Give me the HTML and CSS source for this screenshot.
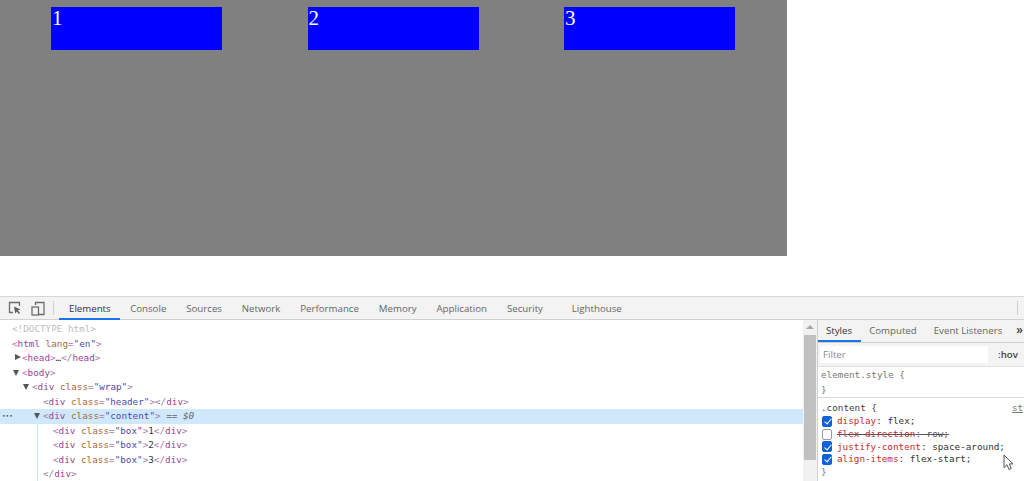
FILE: index.html
```html
<!DOCTYPE html>
<html lang="en">
<head>
<meta charset="utf-8">
<title>Flex demo with DevTools</title>
<link rel="stylesheet" href="styles.css">
</head>
<body>
<main class="viewport">
  <section class="wrap">
    <div class="box">1</div>
    <div class="box">2</div>
    <div class="box">3</div>
  </section>
</main>
<section class="devtools">
  <header class="toolbar">
    <div class="tool-icons">
      <svg class="tool-icon" width="14" height="14" viewBox="0 0 14 14" aria-hidden="true"><path d="M5 11.5H1.5V1.5h10V5" fill="none" stroke="#6e6e6e" stroke-width="1.3"/><path d="M6 5.5l6.5 3-2.6 1 2.2 2.6-1.2 1-2.1-2.6-1.6 2z" fill="#5f5f5f"/></svg>
      <svg class="tool-icon" width="14" height="15" viewBox="0 0 14 15" aria-hidden="true"><path d="M4.5 4V1.5h8.5v12H8" fill="none" stroke="#6e6e6e" stroke-width="1.3"/><rect x="1" y="6" width="6.5" height="8" fill="none" stroke="#6e6e6e" stroke-width="1.3"/></svg>
    </div>
    <span class="divider"></span>
    <nav class="tabs">
      <span class="tab active">Elements</span>
      <span class="tab">Console</span>
      <span class="tab">Sources</span>
      <span class="tab">Network</span>
      <span class="tab">Performance</span>
      <span class="tab">Memory</span>
      <span class="tab">Application</span>
      <span class="tab">Security</span>
      <span class="tab tab-light">Lighthouse</span>
    </nav>
    <span class="divider divider-end"></span>
  </header>
  <div class="panes">
    <div class="dom">
      <div class="tree">
        <div class="line ind0 doctype">&lt;!DOCTYPE html&gt;</div>
        <div class="line ind0"><i>&lt;</i><b>html</b> <u>lang</u><i>=</i><s>"en"</s><i>&gt;</i></div>
        <div class="line ind1"><span class="tri closed"></span><i>&lt;</i><b>head</b><i>&gt;</i>…<i>&lt;/</i><b>head</b><i>&gt;</i></div>
        <div class="line ind1"><span class="tri"></span><i>&lt;</i><b>body</b><i>&gt;</i></div>
        <div class="line ind2"><span class="tri"></span><i>&lt;</i><b>div</b> <u>class</u><i>=</i><s>"wrap"</s><i>&gt;</i></div>
        <div class="line ind3"><i>&lt;</i><b>div</b> <u>class</u><i>=</i><s>"header"</s><i>&gt;&lt;/</i><b>div</b><i>&gt;</i></div>
        <div class="line ind3 selected"><span class="dots">•••</span><span class="tri"></span><i>&lt;</i><b>div</b> <u>class</u><i>=</i><s>"content"</s><i>&gt;</i> <span class="eq">== <em>$0</em></span></div>
        <div class="children">
          <div class="line ind4"><i>&lt;</i><b>div</b> <u>class</u><i>=</i><s>"box"</s><i>&gt;</i>1<i>&lt;/</i><b>div</b><i>&gt;</i></div>
          <div class="line ind4"><i>&lt;</i><b>div</b> <u>class</u><i>=</i><s>"box"</s><i>&gt;</i>2<i>&lt;/</i><b>div</b><i>&gt;</i></div>
          <div class="line ind4"><i>&lt;</i><b>div</b> <u>class</u><i>=</i><s>"box"</s><i>&gt;</i>3<i>&lt;/</i><b>div</b><i>&gt;</i></div>
          <div class="line ind3"><i>&lt;/</i><b>div</b><i>&gt;</i></div>
        </div>
      </div>
      <div class="scrollbar">
        <span class="arrow"></span>
        <span class="thumb"></span>
      </div>
    </div>
    <aside class="sidebar">
      <div class="side-tabs">
        <span class="side-tab active">Styles</span>
        <span class="side-tab">Computed</span>
        <span class="side-tab listeners">Event Listeners</span>
        <span class="side-tab more">»</span>
      </div>
      <div class="filter-row">
        <span class="filter">Filter</span>
        <span class="hov">:hov</span>
      </div>
      <div class="rule rule-first">
        <div class="rule-line muted">element.style {</div>
        <div class="rule-line muted">}</div>
      </div>
      <div class="rule rule-second">
        <div class="rule-head"><span>.content {</span><span class="source">sty</span></div>
        <label class="prop"><span class="check on"></span><span><span class="name">display</span>: flex;</span></label>
        <label class="prop"><span class="check"></span><span class="off"><span class="name">flex-direction</span>: row;</span></label>
        <label class="prop"><span class="check on"></span><span><span class="name">justify-content</span>: space-around;</span></label>
        <label class="prop"><span class="check on"></span><span><span class="name">align-items</span>: flex-start;</span></label>
        <div class="rule-line muted rule-close">}</div>
      </div>
    </aside>
  </div>
  <svg class="cursor" width="12" height="17" viewBox="0 0 12 17" aria-hidden="true"><path d="M1 1v12.5l3-2.8 2 4.8 2.3-1-2-4.6H10z" fill="#fff" stroke="#555" stroke-width="1"/></svg>
</section>
</body>
</html>
```
FILE: styles.css
```css
* { box-sizing: border-box; }
html, body { margin: 0; height: 100%; }
body {
  width: 1024px;
  height: 481px;
  overflow: hidden;
  background: #fff;
  display: flex;
  flex-direction: column;
}
.viewport { height: 296px; flex: none; }
.wrap {
  width: 787px;
  height: 256px;
  background: #808080;
  display: flex;
  justify-content: space-between;
  align-items: flex-start;
  padding: 7px 52px 0 51px;
}
.box {
  width: 171px;
  height: 43px;
  background: #0000ff;
  color: #fff;
  font: 21px/22px "Liberation Serif", serif;
  padding-left: 1px;
}
.devtools {
  position: relative;
  flex: 1;
  min-height: 0;
  display: flex;
  flex-direction: column;
  overflow: hidden;
  font-family: "Open Sans", sans-serif;
}
.toolbar {
  height: 24px;
  flex: none;
  display: flex;
  align-items: center;
  background: #f3f3f3;
  border-top: 1px solid #d6d6d6;
  border-bottom: 1px solid #d0d0d0;
}
.tool-icons { display: flex; align-items: center; gap: 9px; padding-left: 8px; width: 53px; flex: none; }
.tool-icon { flex: none; }
.divider { width: 1px; height: 14px; background: #cfcfcf; flex: none; }
.divider-end { margin-left: auto; margin-right: 6px; }
.tabs { display: flex; height: 23px; margin-left: 5px; flex: none; }
.tab {
  padding: 0 9.95px;
  font-size: 9.7px;
  line-height: 23px;
  color: #666;
  white-space: nowrap;
}
.tab:first-child { padding-left: 10px; padding-right: 9.5px; }
.tab.active { color: #333; box-shadow: inset 0 -2px 0 #1a73e8; }
.tab-light { margin-left: 9px; }
.panes { flex: 1; display: flex; min-height: 0; }
.dom { width: 817px; flex: none; display: flex; background: #fff; }
.tree {
  flex: 1;
  min-width: 0;
  padding-top: 2px;
  font: 9.3px/14.5px "DejaVu Sans Mono", monospace;
  color: #333;
}
.line { position: relative; height: 14.5px; white-space: pre; }
.line i { font-style: normal; color: #a57da3; }
.line b { font-weight: normal; color: #9a3f94; }
.line u { text-decoration: none; color: #a8692f; }
.line s { text-decoration: none; color: #4a4ab0; }
.doctype { color: #bdbdbd; }
.ind0 { padding-left: 12px; }
.ind1 { padding-left: 22px; }
.ind2 { padding-left: 32px; }
.ind3 { padding-left: 43px; }
.ind4 { padding-left: 53px; }
.selected { background: #cfe8fc; }
.children { background: linear-gradient(#c6d9f5, #c6d9f5) 37px 0 / 1px 100% no-repeat; }
.tri {
  position: absolute;
  margin-left: -9px;
  margin-top: 4px;
  width: 0;
  height: 0;
  border-left: 3.5px solid transparent;
  border-right: 3.5px solid transparent;
  border-top: 6px solid #555;
}
.tri.closed {
  margin-left: -7px;
  margin-top: 3px;
  border-top: 3.5px solid transparent;
  border-bottom: 3.5px solid transparent;
  border-left: 6px solid #555;
  border-right: 0;
}
.dots { position: absolute; left: 2px; top: 0; font-size: 6px; color: #555; }
.eq { color: #666; }
.eq em { font-style: italic; }
.scrollbar {
  width: 14px;
  flex: none;
  background: #f1f1f1;
  display: flex;
  flex-direction: column;
  align-items: center;
  padding-top: 5px;
}
.arrow {
  width: 0;
  height: 0;
  border-left: 4px solid transparent;
  border-right: 4px solid transparent;
  border-bottom: 4px solid #a8a8a8;
}
.thumb { width: 12px; height: 125px; margin-top: 6px; background: #c1c1c1; }
.sidebar { flex: 1; min-width: 0; border-left: 1px solid #d0d0d0; overflow: hidden; }
.side-tabs {
  height: 23px;
  display: flex;
  background: #f3f3f3;
  border-bottom: 1px solid #d0d0d0;
}
.side-tab {
  padding: 0 8px;
  font-size: 9.7px;
  line-height: 22px;
  color: #666;
  white-space: nowrap;
  flex: none;
}
.side-tab.active { color: #333; box-shadow: inset 0 -2px 0 #1a73e8; padding-right: 9px; }
.side-tab.listeners { margin-left: 1px; }
.side-tab.more { padding: 0; font-size: 12px; line-height: 19px; font-weight: 600; color: #444; margin-left: 6px; }
.filter-row {
  height: 24px;
  display: flex;
  align-items: center;
  background: #f3f3f3;
  border-bottom: 1px solid #e0e0e0;
  padding-left: 2px;
}
.filter {
  width: 168px;
  height: 17px;
  background: #fff;
  font-size: 9.7px;
  line-height: 17px;
  color: #8a8a8a;
  padding-left: 3px;
}
.hov { margin-left: 10px; font: 600 9.7px/17px "Open Sans", sans-serif; color: #444; }
.rule { font: 9.3px/14px "DejaVu Sans Mono", monospace; color: #333; padding-left: 3px; }
.rule-first { height: 31px; border-bottom: 1px solid #d8d8d8; }
.rule-second { padding-top: 2px; }
.rule-line { height: 15px; line-height: 15px; }
.rule-close { margin-top: -2px; }
.muted { color: #777; }
.rule-head { height: 15px; line-height: 15px; display: flex; gap: 135px; white-space: nowrap; color: #444; }
.source { color: #777; text-decoration: underline; }
.prop { display: flex; align-items: center; height: 12.7px; gap: 5px; white-space: nowrap; }
.name { color: #c8282c; }
.off { text-decoration: line-through; color: #555; }
.check {
  width: 10px;
  height: 11px;
  flex: none;
  margin-left: 1px;
  border: 1px solid #9a9a9a;
  border-radius: 2px;
  background: #fff;
  position: relative;
}
.check.on { border-color: #0f62d6; background: #0f62d6; }
.check.on::after {
  content: "";
  position: absolute;
  left: 2.5px;
  top: 0.5px;
  width: 3px;
  height: 6px;
  border: solid #fff;
  border-width: 0 1.5px 1.5px 0;
  transform: rotate(40deg);
}
.cursor { position: absolute; left: 1003px; top: 158px; }
```
